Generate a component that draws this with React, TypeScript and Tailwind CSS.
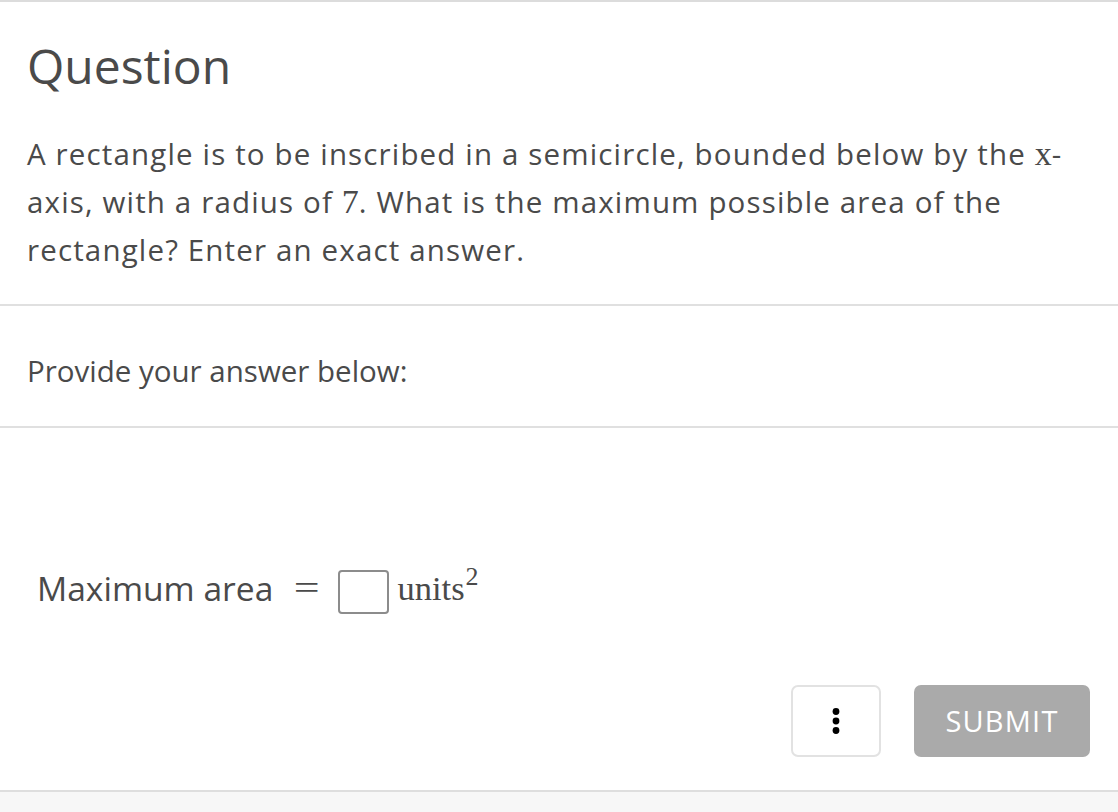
import { useState } from "react"

const sans = { fontFamily: '"Open Sans", "Noto Sans", Arial, sans-serif' }

function MoreIcon() {
    return (
        <svg width="10" height="32" viewBox="0 0 10 32" aria-hidden="true">
            <circle cx="5" cy="6.5" r="3.4" fill="#000" />
            <circle cx="5" cy="16" r="3.4" fill="#000" />
            <circle cx="5" cy="25.5" r="3.4" fill="#000" />
        </svg>
    )
}

export default function App() {
    const [answer, setAnswer] = useState("")

    return (
        <div
            className="w-full min-h-[812px] flex flex-col bg-white text-[#4a4a4a] border-t-2 border-[#dcdcdc]"
            style={sans}
        >
            {/* Question */}
            <div className="px-[27px] pt-[32px] pb-[30px] border-b-2 border-[#e0e0e0]">
                <h1 className="text-[48px] leading-[64px] font-normal text-[#4a4a4a]">Question</h1>
                <p className="mt-[32px] text-[29.5px] leading-[48px] tracking-[1.15px]">
                    A rectangle is to be inscribed in a semicircle, bounded below by the{" "}
                    <span className="font-['Liberation_Serif',serif] text-[34px] tracking-normal">x</span>-axis, with a
                    radius of <span className="font-['Liberation_Serif',serif] text-[34px] tracking-normal">7</span>. What
                    is the maximum possible area of the rectangle? Enter an exact answer.
                </p>
            </div>

            {/* Prompt */}
            <div className="px-[27px] pt-[41px] pb-[31px] border-b-2 border-[#e0e0e0]">
                <p className="text-[29.5px] leading-[48px]">Provide your answer below:</p>
            </div>

            {/* Answer */}
            <div className="px-[28px] pt-[142px] pb-[33px] border-b-2 border-[#dedede]">
                <div className="flex items-start pl-[9px]">
                    <span className="text-[33.6px] leading-[36px]">Maximum area</span>
                    <span className="ml-[24px] inline-block scale-x-[1.35] font-['Liberation_Serif',serif] text-[34px] leading-[36px]">
                        =
                    </span>
                    <input
                        value={answer}
                        onChange={e => setAnswer(e.target.value)}
                        className="ml-[22px] w-[51px] h-[44px] border-2 border-[#8c8c8c] rounded-[4px] outline-none px-1 text-[24px]"
                        aria-label="Maximum area"
                    />
                    <span className="ml-[8px] font-['Liberation_Serif',serif] text-[34.5px] leading-[36px]">
                        units
                        <sup className="text-[26px] relative -top-[15px] ml-[1px]">2</sup>
                    </span>
                </div>

                <div className="mt-[71px] flex justify-end gap-[33px]">
                    <button className="w-[90px] h-[72px] flex items-center justify-center border-2 border-[#e2e2e2] rounded-[7px] bg-white">
                        <MoreIcon />
                    </button>
                    <button className="w-[176px] h-[72px] rounded-[7px] bg-[#aaaaaa] text-white text-[29px] tracking-[1.2px]">
                        SUBMIT
                    </button>
                </div>
            </div>

            <div className="flex-1 bg-[#f7f7f7]" />
        </div>
    )
}
